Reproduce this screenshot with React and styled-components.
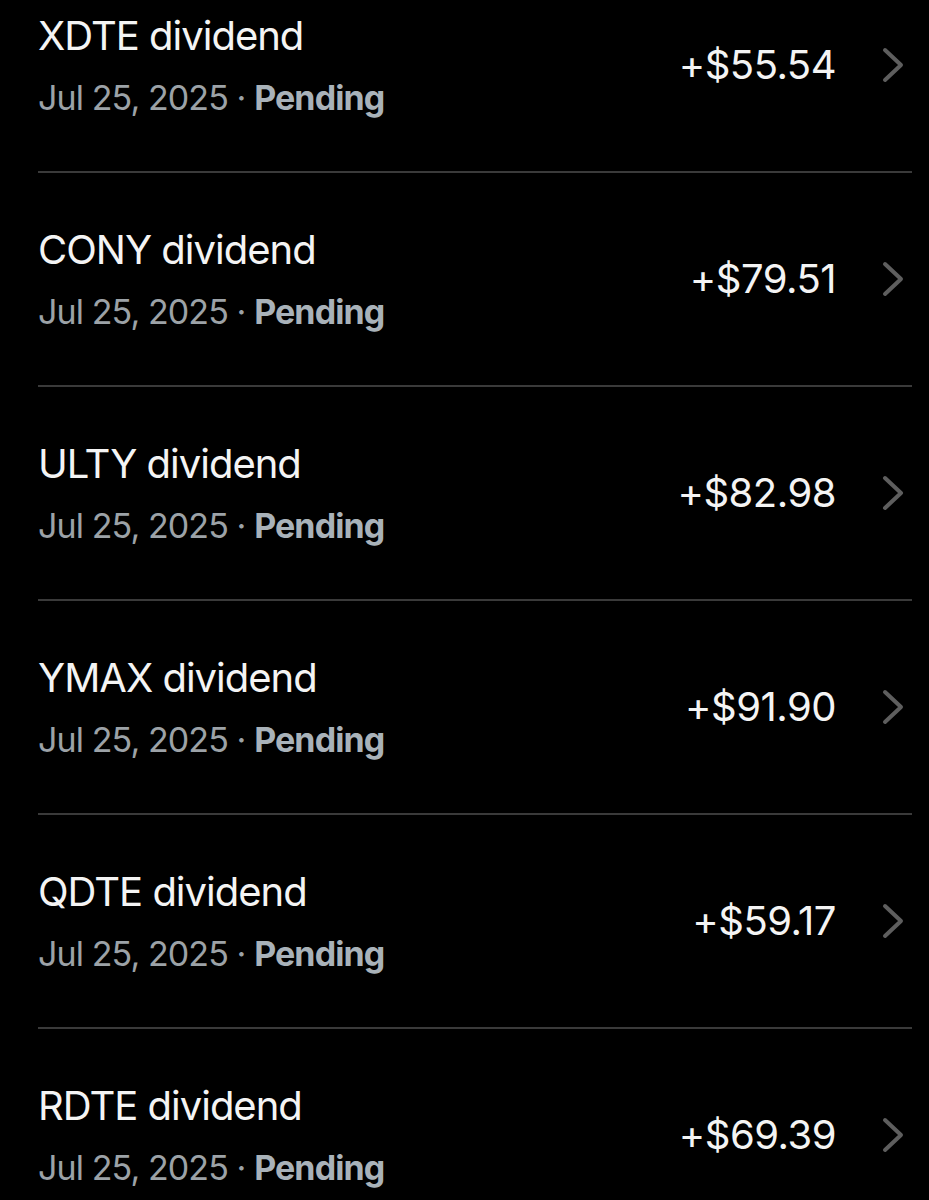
import React from 'react';
import styled, { createGlobalStyle } from 'styled-components';

const GlobalStyle = createGlobalStyle`
  html, body {
    margin: 0;
    background: #000;
  }
  body {
    font-family: Inter, "Noto Sans", "Liberation Sans", sans-serif;
    -webkit-font-smoothing: antialiased;
  }
`;

const DIVIDENDS = [
  { ticker: 'XDTE', amount: '+$55.54' },
  { ticker: 'CONY', amount: '+$79.51' },
  { ticker: 'ULTY', amount: '+$82.98' },
  { ticker: 'YMAX', amount: '+$91.90' },
  { ticker: 'QDTE', amount: '+$59.17' },
  { ticker: 'RDTE', amount: '+$69.39' },
];

const Screen = styled.div`
  width: 929px;
  height: 1200px;
  overflow: hidden;
  background: #000;
`;

const List = styled.ul`
  list-style: none;
  margin: -41px 0 0;
  padding: 0 17px 0 38px;
`;

const Row = styled.li`
  height: 212px;
  display: flex;
  align-items: center;
  border-bottom: 2px solid #3a3a3a;
`;

const Info = styled.div`
  flex: 1;
  display: flex;
  flex-direction: column;
`;

const Title = styled.div`
  color: #f4f4f4;
  font-size: 40px;
  line-height: 48px;
  letter-spacing: -1px;
`;

const Meta = styled.div`
  margin-top: 17px;
  color: #9ca2a7;
  font-size: 34px;
  line-height: 42px;
  letter-spacing: -0.9px;
`;

const Status = styled.span`
  color: #a9b2b9;
  font-weight: 700;
`;

const Amount = styled.div`
  color: #f4f4f4;
  font-size: 40px;
  line-height: 48px;
  letter-spacing: -0.5px;
  margin-right: 46px;
`;

const Chevron = styled.svg`
  width: 22px;
  height: 36px;
  margin-right: 8px;
  flex-shrink: 0;
`;

const ChevronIcon = () => (
  <Chevron viewBox="0 0 22 36" fill="none">
    <polyline
      points="3,3 19,18 3,33"
      stroke="#5e5e5e"
      strokeWidth="4"
      strokeLinecap="round"
      strokeLinejoin="round"
    />
  </Chevron>
);

const DividendRow = ({ ticker, amount }) => (
  <Row>
    <Info>
      <Title>{ticker} dividend</Title>
      <Meta>
        Jul 25, 2025 · <Status>Pending</Status>
      </Meta>
    </Info>
    <Amount>{amount}</Amount>
    <ChevronIcon />
  </Row>
);

const App = () => (
  <>
    <GlobalStyle />
    <Screen>
      <List>
        {DIVIDENDS.map((d) => (
          <DividendRow key={d.ticker} ticker={d.ticker} amount={d.amount} />
        ))}
      </List>
    </Screen>
  </>
);

export default App;
